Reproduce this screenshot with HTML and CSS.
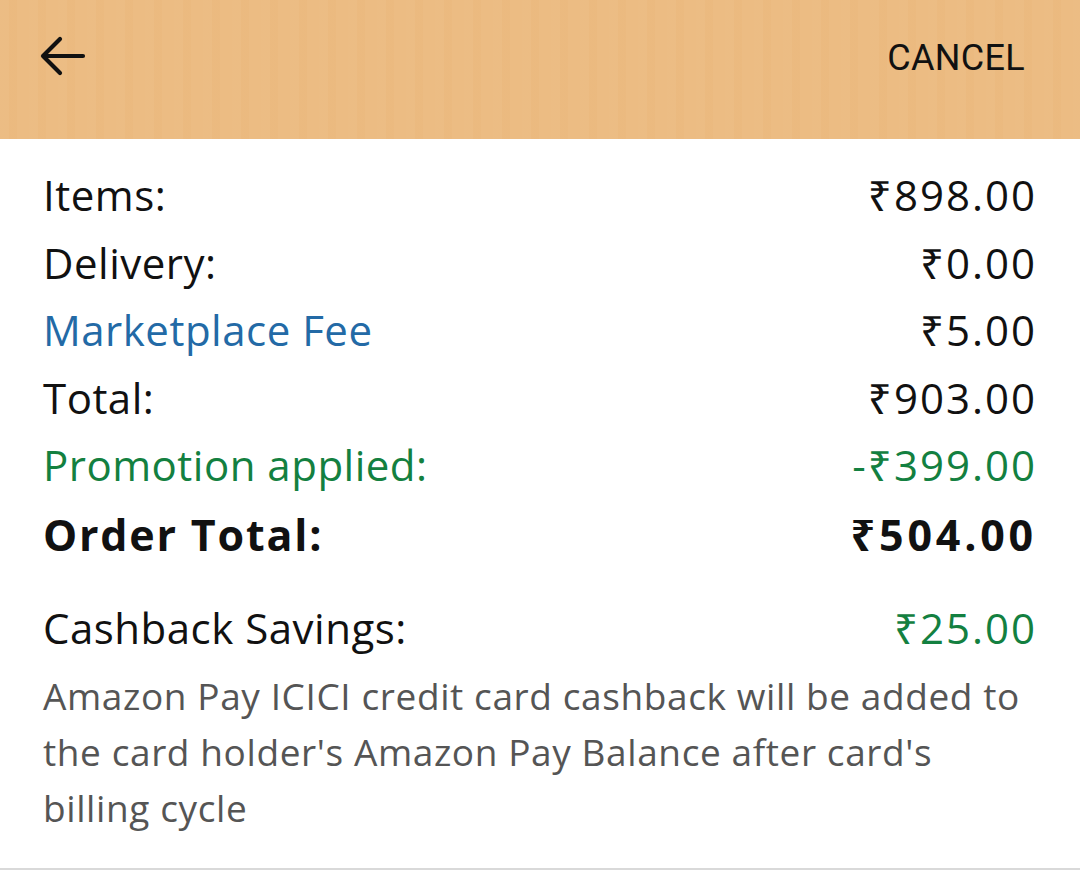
FILE: index.html
```html
<!DOCTYPE html>
<html>
<head>
<meta charset="utf-8">
<link rel="stylesheet" href="styles.css">
</head>
<body>
<header class="topbar">
  <svg class="back" width="48" height="48" viewBox="0 0 48 48" aria-hidden="true">
    <path d="M45 24H5M22 7L5 24L22 41" fill="none" stroke="#111" stroke-width="4.2" stroke-linecap="round" stroke-linejoin="round"/>
  </svg>
  <span class="cancel">CANCEL</span>
</header>
<main class="summary">
  <div class="row"><span>Items:</span><span class="amt">₹898.00</span></div>
  <div class="row"><span>Delivery:</span><span class="amt">₹0.00</span></div>
  <div class="row"><span class="link">Marketplace Fee</span><span class="amt">₹5.00</span></div>
  <div class="row"><span>Total:</span><span class="amt">₹903.00</span></div>
  <div class="row green"><span>Promotion applied:</span><span class="amt">-₹399.00</span></div>
  <div class="row total"><span>Order Total:</span><span class="amt">₹504.00</span></div>
  <div class="row cashback"><span>Cashback Savings:</span><span class="amt green">₹25.00</span></div>
  <p class="note">Amazon Pay ICICI credit card cashback will be added to the card holder's Amazon Pay Balance after card's billing cycle</p>
</main>
</body>
</html>
```
FILE: styles.css
```css
html, body {
  margin: 0;
  padding: 0;
  background: #fff;
  width: 1080px;
  height: 870px;
  overflow: hidden;
}
body {
  font-family: "Open Sans", "Noto Sans", "DejaVu Sans", sans-serif;
  color: #111;
}
.topbar {
  height: 139px;
  box-sizing: border-box;
  display: flex;
  align-items: flex-start;
  justify-content: space-between;
  padding: 32px 55px 0 38px;
  background-color: #ecbb81;
  background-image: repeating-linear-gradient(90deg, rgba(255,255,255,0.025) 0 9px, rgba(200,140,70,0.025) 9px 17px, rgba(255,255,255,0.015) 17px 29px);
}
.back { display: block; }
.cancel {
  font-family: Roboto, "Liberation Sans", sans-serif;
  font-size: 36px;
  color: #111;
  margin-top: 5px;
  letter-spacing: 0.3px;
}
.summary {
  padding: 22px 43px 0 43px;
  border-bottom: 2px solid #d9d9d9;
  height: 731px;
  box-sizing: border-box;
}
.row {
  display: flex;
  justify-content: space-between;
  font-size: 42px;
  line-height: 67.5px;
  letter-spacing: 0.5px;
}
.amt { letter-spacing: 2px; }
.link { color: #236aa6; }
.green { color: #138040; }
.total {
  font-weight: 700;
  font-size: 43px;
  line-height: 72px;
  letter-spacing: 1.8px;
}
.total .amt { letter-spacing: 3.8px; }
.cashback { margin-top: 23px; }
.note {
  margin: 7px 0 0;
  font-size: 37px;
  line-height: 56px;
  color: #555;
  letter-spacing: 0.6px;
  padding-right: 8px;
}
```
